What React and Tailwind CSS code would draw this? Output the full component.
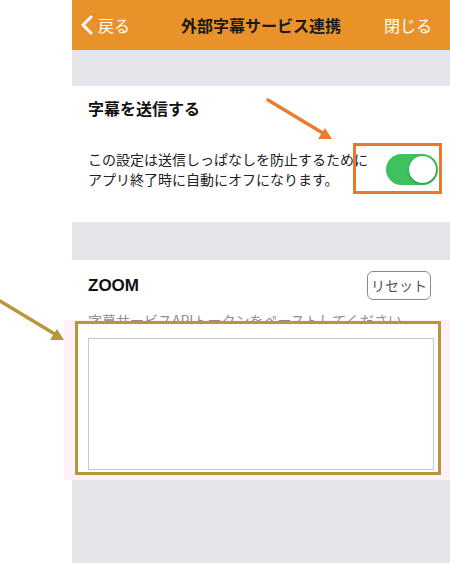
import { useState } from 'react'

const JP = "font-['Noto_Sans_CJK_JP','Noto_Sans',sans-serif]"

function Toggle({ on, onChange }) {
  return (
    <button
      type="button"
      onClick={() => onChange(!on)}
      className={`relative h-[31px] w-[52px] shrink-0 rounded-full transition-colors ${on ? 'bg-[#3DC25D]' : 'bg-[#e5e5ea]'}`}
    >
      <span
        className={`absolute top-[2px] h-[27px] w-[27px] rounded-full bg-white shadow-[0_1px_3px_rgba(0,0,0,0.3)] transition-all ${on ? 'left-[23px]' : 'left-[2px]'}`}
      />
    </button>
  )
}

export default function App() {
  const [sending, setSending] = useState(true)
  const [token, setToken] = useState('')

  return (
    <div className={`relative flex h-[563px] w-[450px] overflow-hidden bg-white ${JP}`}>
      <div className="w-[72px] shrink-0" />

      <div className="flex flex-1 flex-col bg-[#E5E4EA]">
        <header className="grid h-[50px] grid-cols-[1fr_auto_1fr] items-center bg-[#E99229]">
          <div className="flex items-center gap-[4px] pl-[8px] text-white">
            <svg width="14" height="20" viewBox="0 0 14 20" fill="none">
              <path d="M11 2 L3 10 L11 18" stroke="white" strokeWidth="3" strokeLinecap="round" strokeLinejoin="round" />
            </svg>
            <span className="text-[16px]">戻る</span>
          </div>
          <h1 className="m-0 text-[16px] font-bold text-[#1a1a1a]">外部字幕サービス連携</h1>
          <div className="pr-[18px] text-right text-[16px] text-white">閉じる</div>
        </header>

        <div className="h-[36px]" />

        <section className="h-[136px] bg-white pl-[16px] pr-[12px] pt-[10px]">
          <h2 className="m-0 text-[16px] font-bold leading-[24px] text-[#111]">字幕を送信する</h2>
          <div className="mt-[29px] flex items-center justify-between">
            <p className="m-0 text-[14px] leading-[20px] text-[#222]">
              この設定は送信しっぱなしを防止するために
              <br />
              アプリ終了時に自動にオフになります。
            </p>
            <Toggle on={sending} onChange={setSending} />
          </div>
        </section>

        <div className="h-[38px]" />

        <section className="h-[220px] bg-white pl-[16px] pr-[16px] pt-[11px]">
          <div className="flex items-center justify-between pr-[3px]">
            <h2 className="m-0 font-['Liberation_Sans',sans-serif] text-[17px] font-bold text-[#111]">ZOOM</h2>
            <button
              type="button"
              onClick={() => setToken('')}
              className="h-[29px] w-[64px] rounded-[6px] border border-[#8a8a8a] text-[14px] text-[#555]"
            >
              リセット
            </button>
          </div>
          <p className="m-0 mt-[10px] text-[14px] leading-[20px] text-[#8e8e93]">
            字幕サービスAPIトークンをペーストしてください。
          </p>
          <textarea
            value={token}
            onChange={(event) => setToken(event.target.value)}
            className="relative z-[3] mt-[8px] block h-[132px] w-[346px] resize-none border border-[#c9c6cc] bg-white outline-none"
          />
        </section>
      </div>

      {/* annotations */}
      <div className="pointer-events-none absolute left-[64px] top-[320px] z-[1] h-[160px] w-[386px] bg-[rgba(255,0,150,0.06)]" />
      <div className="pointer-events-none absolute left-[353px] top-[143px] z-[1] h-[51px] w-[89px] border-[3px] border-[#E9772E]" />
      <div className="pointer-events-none absolute left-[75px] top-[321px] z-[2] h-[154px] w-[366px] border-[3px] border-[#B8963A] bg-white" />
      <svg className="pointer-events-none absolute left-0 top-0 z-[4]" width="450" height="563">
        <line x1="268" y1="100" x2="326" y2="135" stroke="#EC7B32" strokeWidth="3.5" strokeLinecap="round" />
        <path d="M332 139 L318 139 L325 128 Z" fill="#EC7B32" />
        <line x1="0" y1="301" x2="58" y2="336" stroke="#B8963A" strokeWidth="3.5" strokeLinecap="round" />
        <path d="M64 340 L50 340 L57 329 Z" fill="#B8963A" />
      </svg>
    </div>
  )
}
